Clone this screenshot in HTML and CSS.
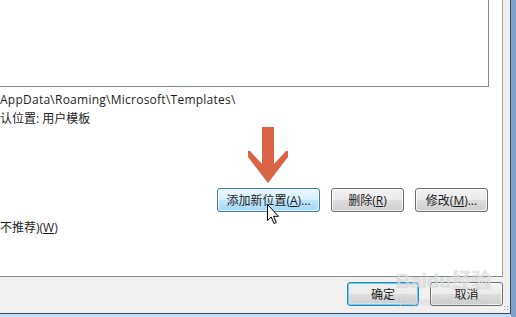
FILE: index.html
```html
<!DOCTYPE html>
<html lang="zh-CN">
<head>
    <meta charset="UTF-8">
    <title>模板位置</title>
    <link rel="stylesheet" href="styles.css">
</head>
<body>
    <div class="window">
        <!-- Zone principale blanche -->
        <div class="panel">
            <div class="listbox"></div>
            <div class="info">
                <div class="line path">AppData\Roaming\Microsoft\Templates\</div>
                <div class="line">认位置: 用户模板</div>
            </div>
            <div class="actions">
                <button class="btn btn-hover">添加新位置(<u>A</u>)...</button>
                <button class="btn">删除(<u>R</u>)</button>
                <button class="btn">修改(<u>M</u>)...</button>
            </div>
            <div class="line option">不推荐)(<u>W</u>)</div>
        </div>

        <!-- Barre du bas -->
        <div class="footer">
            <button class="btn btn-default">确定</button>
            <button class="btn btn-cancel">取消</button>
            <span class="grip"></span>
        </div>
    </div>

    <!-- Flèche d'annotation -->
    <svg class="arrow" width="44" height="60" viewBox="246 125 44 60">
        <polygon points="262,127 274,127 274,164 286,151 288,151 288,157 268,183 248,157 248,151 250,151 262,164" fill="#dc6446"/>
    </svg>

    <!-- Curseur de souris -->
    <svg class="cursor" width="13" height="21" viewBox="0 0 13 21">
        <path d="M0.5 0.5 L0.5 16.5 L4.2 13 L7 19.5 L9.3 18.5 L6.6 12.3 L11.5 12.3 Z" fill="#fff" stroke="#000" stroke-width="1" stroke-linejoin="miter"/>
    </svg>

    <!-- Filigrane -->
    <div class="watermark">
        <div class="wm-logo">Baidu经验</div>
        <div class="wm-url">jingyan.baidu.com</div>
    </div>
</body>
</html>
```

FILE: styles.css
```css
/* Styles généraux */
body {
    margin: 0;
    width: 516px;
    height: 317px;
    overflow: hidden;
    position: relative;
    font-family: "Open Sans", "Noto Sans CJK SC", sans-serif;
    font-size: 12px;
    color: #1e1e1e;
    background: linear-gradient(to right, transparent 511px, #7fa3cd 511px), #c2ddf8;
}

/* Fenêtre */
.window {
    width: 510px;
    height: 313px;
    border-right: 1px solid #3e4b5c;
    border-bottom: 1px solid #3e4b5c;
    background-color: #f0f0f0;
}

.panel {
    width: 502px;
    height: 276px;
    background-color: #fff;
    border-right: 1px solid #a0a0a0;
    border-bottom: 1px solid #84878c;
}

.listbox {
    width: 488px;
    height: 86px;
    border-right: 1px solid #828790;
    border-bottom: 1px solid #828790;
}

.info {
    margin-top: 3px;
}

.line {
    line-height: 19px;
    white-space: nowrap;
}

.path {
    letter-spacing: 0.25px;
}

.actions {
    display: flex;
    justify-content: flex-end;
    gap: 11px;
    padding-right: 14px;
    margin-top: 60px;
}

.option {
    margin-top: 6px;
}

/* Boutons style Windows 7 */
.btn {
    width: 73px;
    height: 24px;
    padding: 0;
    font-family: inherit;
    font-size: 12px;
    color: #1e1e1e;
    border: 1px solid #707070;
    border-radius: 3px;
    background: linear-gradient(#f2f2f2 0%, #ebebeb 48%, #dddddd 52%, #cfcfcf 100%);
    box-shadow: inset 0 0 0 1px rgba(255, 255, 255, 0.7);
}

.btn-hover {
    width: 103px;
    border-color: #3c7fb1;
    background: linear-gradient(#eaf6fd 0%, #d9f0fc 48%, #bee6fd 52%, #a7d9f5 100%);
}

.footer {
    position: relative;
    display: flex;
    justify-content: flex-end;
    gap: 11px;
    padding: 5px 7px 0 0;
    height: 31px;
}

.btn-default {
    width: 72px;
    border-color: #3c7fb1;
    box-shadow: inset 0 0 0 1px #5fd0f5, inset 0 0 0 2px rgba(200, 240, 255, 0.6);
}

.grip {
    position: absolute;
    right: 1px;
    bottom: 2px;
    width: 6px;
    height: 6px;
    background:
        radial-gradient(circle, #a0a0a0 0.8px, transparent 1px) 0 0 / 3px 3px;
}

/* Éléments superposés */
.arrow {
    position: absolute;
    left: 246px;
    top: 125px;
}

.cursor {
    position: absolute;
    left: 267px;
    top: 204px;
}

.watermark {
    position: absolute;
    left: 396px;
    top: 270px;
    color: rgba(255, 255, 255, 0.55);
    text-shadow: 0 0 1px rgba(120, 120, 120, 0.45);
    pointer-events: none;
}

.wm-logo {
    font-family: "Liberation Sans", "Noto Sans CJK SC", sans-serif;
    font-size: 20px;
    font-weight: bold;
    line-height: 22px;
}

.wm-url {
    font-family: "Liberation Sans", sans-serif;
    font-size: 11px;
    line-height: 12px;
    margin-top: 3px;
    padding-left: 3px;
}
```
